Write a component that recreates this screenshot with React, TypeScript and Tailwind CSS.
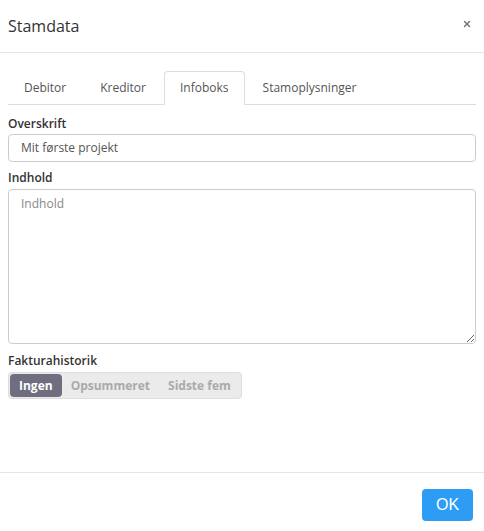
import { X } from "lucide-react";

const tabs = ["Debitor", "Kreditor", "Infoboks", "Stamoplysninger"];
const options = ["Ingen", "Opsummeret", "Sidste fem"];

export default function App() {
  return (
    <div
      className="flex h-[531px] w-[484px] flex-col bg-white text-[#555]"
      style={{ fontFamily: '"Open Sans", sans-serif' }}
    >
      <div className="flex h-[53px] shrink-0 items-center justify-between border-b border-[#e5e5e5] pl-2 pr-[12px]">
        <h1 className="text-[16px] text-[#333]">Stamdata</h1>
        <button type="button" className="-mt-1 text-[#777]" aria-label="Luk">
          <X className="h-[10px] w-[10px]" strokeWidth={3.5} />
        </button>
      </div>

      <div className="flex-1 px-2 pt-[18px]">
        <div className="flex h-[34px] border-b border-[#ddd]">
          {tabs.map((t) => (
            <div
              key={t}
              className={
                t === "Infoboks"
                  ? "-mb-px mr-[2px] flex items-center rounded-t border border-b-white border-[#ddd] bg-white px-[15px] text-[12px] text-[#555]"
                  : "mr-[2px] flex items-center border border-transparent px-[15px] text-[12px] text-[#555]"
              }
            >
              {t}
            </div>
          ))}
        </div>

        <label className="mt-[10px] block text-[12px] font-semibold leading-[17px] text-[#333]">
          Overskrift
        </label>
        <div className="mt-[2px] flex h-[28px] items-center rounded border border-[#ccc] px-3 text-[12px] text-[#555]">
          Mit første projekt
        </div>

        <label className="mt-[7px] block text-[12px] font-semibold leading-[17px] text-[#333]">
          Indhold
        </label>
        <textarea
          placeholder="Indhold"
          className="mt-[3px] block h-[155px] w-full resize-y rounded border border-[#ccc] px-3 py-[5px] text-[12px] text-[#555] placeholder:text-[#888]"
        />

        <label className="mt-[8px] block text-[12px] font-semibold leading-[17px] text-[#333]">
          Fakturahistorik
        </label>
        <div className="mt-[3px] inline-flex h-[27px] items-center rounded border border-[#ddd] bg-[#ebebeb] p-[1px]">
          {options.map((o) => (
            <div
              key={o}
              className={
                o === "Ingen"
                  ? "flex h-full items-center rounded bg-[#6f6e80] px-[9px] text-[12px] font-bold text-white"
                  : "flex h-full items-center px-[9px] text-[12px] font-bold text-[#aaa]"
              }
            >
              {o}
            </div>
          ))}
        </div>
      </div>

      <div className="flex h-[59px] shrink-0 items-start justify-end border-t border-[#e5e5e5] pr-[11px] pt-4">
        <button
          type="button"
          className="h-[32px] w-[51px] rounded bg-[#2d9cf5] text-[16px] text-white"
          style={{ fontFamily: '"Liberation Sans", Arial, sans-serif' }}
        >
          OK
        </button>
      </div>
    </div>
  );
}
